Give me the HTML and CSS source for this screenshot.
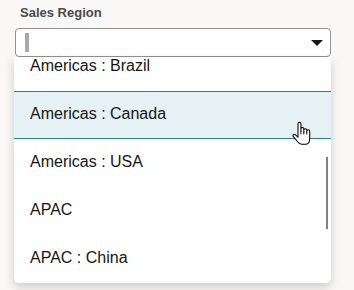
FILE: index.html
```html
<!DOCTYPE html>
<html lang="en">
<head>
<meta charset="utf-8">
<title>Sales Region</title>
<link rel="stylesheet" href="styles.css">
</head>
<body>
<div class="field">
  <label class="label">Sales Region</label>
  <div class="input">
    <span class="caret-bar"></span>
    <svg class="arrow" width="12" height="6" viewBox="0 0 12 6"><path d="M0 0H12L6 6Z" fill="#161513"/></svg>
  </div>
  <div class="dropdown">
    <ul class="list">
      <li class="item">Americas : Brazil</li>
      <li class="item hover">Americas : Canada</li>
      <li class="item">Americas : USA</li>
      <li class="item">APAC</li>
      <li class="item">APAC : China</li>
    </ul>
    <div class="scrollbar"></div>
  </div>
</div>
<svg class="hand" width="19" height="24" viewBox="0 0 16 20.5">
  <path d="M5 11.5V2.3a1.25 1.25 0 0 1 2.5 0V9V6.8a1.25 1.25 0 0 1 2.5 0V9.3V7.8a1.25 1.25 0 0 1 2.5 0V9.8V8.8a1.25 1.25 0 0 1 2.5 0V15Q15 19.8 11.8 19.8H8Q6.2 19.8 4.3 17.3L1.1 13.4a1.2 1.2 0 0 1 1.8-1.6L5 13.8Z" fill="#fff" stroke="#000" stroke-width="0.9" stroke-linejoin="round"/>
  <path d="M7.5 9V11.5M10 9.3V11.5M12.5 9.8V11.5" stroke="#000" stroke-width="0.8" fill="none"/>
</svg>
</body>
</html>
```
FILE: styles.css
```css
html, body {
  margin: 0;
  padding: 0;
}
body {
  background: #f9f8f6;
  font-family: "Liberation Sans", Arial, sans-serif;
  width: 354px;
  height: 290px;
  overflow: hidden;
  position: relative;
}
.field {
  padding: 5px 0 0 15px;
  width: 316px;
}
.label {
  display: block;
  font-size: 13px;
  line-height: 16px;
  font-weight: bold;
  color: #4a4948;
  padding-left: 5px;
  margin-bottom: 7px;
}
.input {
  box-sizing: border-box;
  height: 29px;
  border: 1px solid #919191;
  border-radius: 4px;
  background: #fff;
  display: flex;
  align-items: center;
  justify-content: space-between;
  padding: 0 7px 0 9px;
}
.caret-bar {
  width: 4px;
  height: 19px;
  background: #a9a9a9;
}
.arrow {
  display: block;
  margin-top: 1px;
}
.dropdown {
  position: relative;
  margin-left: -1px;
  width: 317px;
  height: 226px;
  overflow: hidden;
  background: #fff;
  border-radius: 0 0 5px 5px;
  box-shadow: 0 4px 10px rgba(0, 0, 0, 0.18);
}
.list {
  list-style: none;
  margin: -14px 0 0 0;
  padding: 0;
}
.item {
  box-sizing: border-box;
  height: 48px;
  padding: 12px 16px 14px 16px;
  font-size: 16px;
  line-height: 20px;
  color: #161513;
  border-top: 1px solid transparent;
  border-bottom: 1px solid transparent;
}
.item.hover {
  background: #e5f1f4;
  border-color: #2a7f9e;
}
.scrollbar {
  position: absolute;
  left: 312px;
  top: 100px;
  width: 2px;
  height: 72px;
  background: #828282;
}
.hand {
  position: absolute;
  left: 292px;
  top: 121px;
}
```
